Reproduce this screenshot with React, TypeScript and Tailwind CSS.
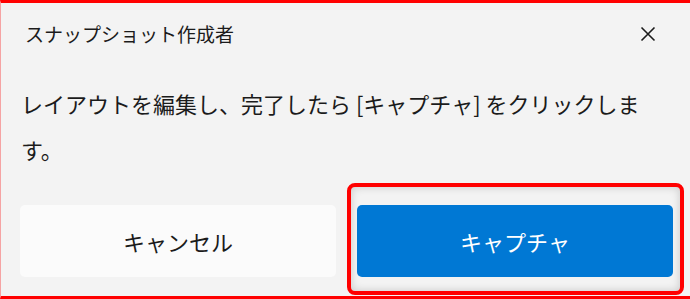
import React from "react";

export default function App() {
  const font = { fontFamily: '"Noto Sans CJK JP", "Noto Sans", sans-serif' };
  return (
    <div
      className="relative w-[690px] h-[299px] bg-[#f3f3f3] border-t-[3px] border-b-[3px] border-l border-t-[#ff0000] border-b-[#ff0000] border-l-[#f5a3a3] box-border overflow-hidden text-[#1b1b1b]"
      style={font}
    >
      <div className="flex items-center justify-between pl-[24px] pr-[34px] pt-[9px] h-[52px]">
        <div className="text-[19px] leading-none">スナップショット作成者</div>
        <svg width="16" height="16" viewBox="0 0 16 16" className="mt-[1px]">
          <path d="M1.5 1.5 L14.5 14.5 M14.5 1.5 L1.5 14.5" stroke="#1b1b1b" strokeWidth="1.6" fill="none" />
        </svg>
      </div>
      <p className="mt-[25px] pl-[20px] pr-[24px] text-[22px] leading-[46px]">
        レイアウトを編集し、完了したら [キャプチャ] をクリックしま
        <br />
        す。
      </p>
      <div className="flex gap-[21px] pl-[19px] pr-[17px] mt-[33px]">
        <button className="flex-1 h-[72px] rounded-[5px] bg-[#fbfbfb] text-[22px] text-[#1b1b1b] flex items-center justify-center">
          キャンセル
        </button>
        <button className="flex-1 h-[72px] rounded-[5px] bg-[#0078d4] text-[22px] text-white flex items-center justify-center">
          キャプチャ
        </button>
      </div>
      <div className="absolute left-[346px] top-[180px] w-[337px] h-[112px] rounded-[8px] border-[4px] border-[#ff0000] shadow-[inset_0_0_8px_rgba(0,0,0,0.18)] pointer-events-none" />
    </div>
  );
}
